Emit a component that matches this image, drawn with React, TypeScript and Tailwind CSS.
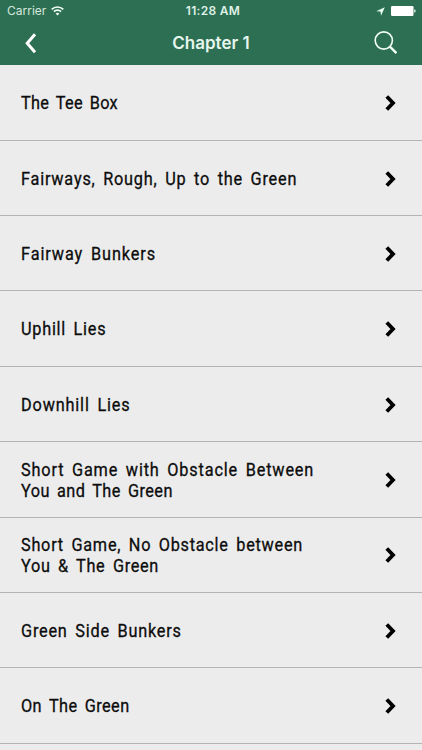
import React from "react";

interface RowLine {
	text: string;
	spacing: string;
}

interface ChapterRowProps {
	lines: RowLine[];
}

const rows: ChapterRowProps[] = [
	{ lines: [{ text: "The Tee Box", spacing: "tracking-[0.27px]" }] },
	{ lines: [{ text: "Fairways, Rough, Up to the Green", spacing: "tracking-[0.85px]" }] },
	{ lines: [{ text: "Fairway Bunkers", spacing: "tracking-[0.98px]" }] },
	{ lines: [{ text: "Uphill Lies", spacing: "tracking-[0.8px]" }] },
	{ lines: [{ text: "Downhill Lies", spacing: "tracking-[0.9px]" }] },
	{
		lines: [
			{ text: "Short Game with Obstacle Between", spacing: "tracking-[0.9px]" },
			{ text: "You and The Green", spacing: "tracking-[0.45px]" },
		],
	},
	{
		lines: [
			{ text: "Short Game, No Obstacle between", spacing: "tracking-[0.8px]" },
			{ text: "You & The Green", spacing: "tracking-[0.73px]" },
		],
	},
	{ lines: [{ text: "Green Side Bunkers", spacing: "tracking-[0.85px]" }] },
	{ lines: [{ text: "On The Green", spacing: "tracking-[0.45px]" }] },
	{ lines: [] },
];

function StatusBar() {
	return (
		<div className="grid h-[22px] grid-cols-3 items-center pr-[6px] pl-[7px] text-[12px] leading-none">
			<div className="flex items-center gap-[5px] text-[#d5e8dd]">
				<span>Carrier</span>
				<svg width="13" height="10" viewBox="0 0 13 10" fill="none" stroke="#f1fff7" strokeWidth="1.7">
					<path d="M0.7 3.4a8.2 8.2 0 0 1 11.6 0" />
					<path d="M2.9 5.7a5.1 5.1 0 0 1 7.2 0" />
					<path d="M6.5 9.6 4.7 7.7a2.6 2.6 0 0 1 3.6 0z" fill="#f1fff7" stroke="none" />
				</svg>
			</div>
			<span className="pl-[3px] text-center font-semibold tracking-[0.3px] text-[#dff2e8]">11:28 AM</span>
			<div className="flex items-center justify-end gap-[6px]">
				<svg width="9" height="9" viewBox="0 0 9 9" fill="#e6fff2">
					<path d="M8.8 0.2 5 8.8 4.5 4.6 0.2 4.2z" />
				</svg>
				<svg width="25" height="10" viewBox="0 0 25 10" fill="#fff">
					<rect width="22.5" height="10" rx="1.2" />
					<path d="M23.3 3.2c1.8.4 1.8 3.2 0 3.6z" />
				</svg>
			</div>
		</div>
	);
}

function NavBar() {
	return (
		<div className="grid h-[43px] grid-cols-3 items-center px-[25px]">
			<svg width="12" height="21" viewBox="0 0 12 21" fill="none" stroke="#fff" strokeWidth="3">
				<path d="M10 1.2 2.2 10.2l7.8 9" />
			</svg>
			<h1 className="text-center text-[17px] font-semibold whitespace-nowrap text-[#e6f6ed]">Chapter 1</h1>
			<svg className="mb-[2px] justify-self-end" width="23" height="23" viewBox="0 0 23 23" fill="none" stroke="#f1fff7">
				<circle cx="9.8" cy="9.5" r="8.6" strokeWidth="1.6" />
				<path d="m15.9 15.6 6.5 6.5" strokeWidth="2.3" />
			</svg>
		</div>
	);
}

function ChapterRow(props: ChapterRowProps) {
	return (
		<li className="flex h-[75.35px] items-center justify-between border-b border-[#b4b4b4] pt-[1.5px] pr-[26px] pl-[21px]">
			<p className="origin-left scale-x-[0.93] pt-px font-['Roboto',sans-serif] text-[17.5px] leading-[21px] whitespace-nowrap text-[#0c0c0c] [word-spacing:3px] [-webkit-text-stroke:0.3px_#0c0c0c]">
				{props.lines.map((line) => (
					<span key={line.text} className={`block ${line.spacing}`}>
						{line.text}
					</span>
				))}
			</p>
			{props.lines.length > 0 && (
				<svg width="11" height="16" viewBox="0 0 11 16" fill="none" stroke="#000" strokeWidth="3.8">
					<path d="M1.8 1.5 8 8l-6.2 6.5" />
				</svg>
			)}
		</li>
	);
}

function App() {
	return (
		<div className="flex h-[750px] w-[422px] flex-col overflow-hidden bg-[#ececec] font-['Inter',sans-serif]">
			<header className="h-[65.45px] shrink-0 bg-[#2d6f53]">
				<StatusBar />
				<NavBar />
			</header>
			<ul>
				{rows.map((row, index) => (
					<ChapterRow key={index} lines={row.lines} />
				))}
			</ul>
		</div>
	);
}

export default App;
